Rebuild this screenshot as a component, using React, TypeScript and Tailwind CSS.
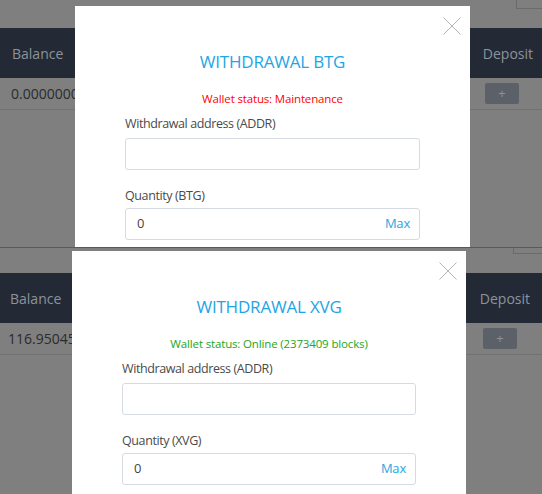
import React from "react";

type PanelProps = {
  height: string;
  bandH: string;
  boxClass: string;
  headerClass: string;
  rowClass: string;
  modalClass: string;
  balance: string;
  coin: string;
  status: string;
  statusClass: string;
};

function CloseX() {
  return (
    <svg width="18" height="18" viewBox="0 0 18 18" className="block">
      <path d="M0.5 0.5 L17.5 17.5 M17.5 0.5 L0.5 17.5" stroke="#b4b4b4" strokeWidth="1" fill="none" />
    </svg>
  );
}

function Panel(p: PanelProps) {
  return (
    <div className={`relative w-full overflow-hidden bg-[#7f7f7f] ${p.height}`}>
      <div className={`flex justify-end items-start ${p.bandH}`}>
        <div className={p.boxClass} />
      </div>
      <div className={`flex items-center justify-between bg-[#232a36] text-[14px] text-[#8c939c] ${p.headerClass}`}>
        <span>Balance</span>
        <span>Deposit</span>
      </div>
      <div className={`flex items-center justify-between border-b border-[#727272] text-[14px] text-[#2b2b2b] ${p.rowClass}`}>
        <span>{p.balance}</span>
        <div className="flex h-[21px] w-[34px] items-center justify-center rounded-[2px] bg-[#5c6169] text-[13px] text-[#8d9198]">
          +
        </div>
      </div>
      <div className={`absolute bg-white h-[260px] flex flex-col px-[50px] pt-[44px] ${p.modalClass}`}>
        <div className="absolute right-[9px] top-[11px]">
          <CloseX />
        </div>
        <div className="h-[24px] text-center text-[17px] leading-[24px] text-[#1ea5e6] tracking-[-0.2px]">
          WITHDRAWAL {p.coin}
        </div>
        <div className={`mt-[17px] h-[16px] text-center text-[11.5px] leading-[16px] tracking-[-0.15px] ${p.statusClass}`}>
          {p.status}
        </div>
        <div className="mt-[8px] h-[18px] text-[12.5px] leading-[18px] tracking-[-0.4px] text-[#4a4a4a]">
          Withdrawal address (ADDR)
        </div>
        <div className="mt-[5px] h-[32px] rounded-[3px] border border-[#d6dbe3]" />
        <div className="mt-[17px] h-[18px] text-[12.5px] leading-[18px] tracking-[-0.4px] text-[#4a4a4a]">
          Quantity ({p.coin})
        </div>
        <div className="mt-[3px] flex h-[32px] items-center justify-between rounded-[3px] border border-[#d6dbe3] pl-[11px] pr-[9px] text-[13px]">
          <span className="text-[#444]">0</span>
          <span className="text-[#29a6e1] tracking-[-0.2px]">Max</span>
        </div>
      </div>
    </div>
  );
}

export default function App() {
  return (
    <div
      className="w-[542px] h-[494px] overflow-hidden bg-[#7f7f7f] flex flex-col"
      style={{ fontFamily: '"Open Sans", "Noto Sans", sans-serif' }}
    >
      <Panel
        height="h-[247px]"
        bandH="h-[28px]"
        boxClass="w-[30px] h-[10px] -mt-[1px] -mr-[4px] border-l border-b border-[#6b6b6b]"
        headerClass="h-[50px] pl-[12px] pr-[9px]"
        rowClass="h-[32px] pl-[11px] pr-[23px]"
        modalClass="left-[75px] top-[6px] w-[395px]"
        balance="0.00000000"
        coin="BTG"
        status="Wallet status: Maintenance"
        statusClass="text-[#ff0000]"
      />
      <div className="h-[1px] w-full bg-[#e0201e]" />
      <Panel
        height="h-[246px]"
        bandH="h-[25px]"
        boxClass="w-[33px] h-[7px] -mt-[1px] -mr-[4px] border-l border-b border-[#6b6b6b]"
        headerClass="h-[50px] pl-[10px] pr-[12px]"
        rowClass="h-[32px] pl-[8px] pr-[25px]"
        modalClass="left-[72px] top-[3px] w-[394px]"
        balance="116.95045000"
        coin="XVG"
        status="Wallet status: Online (2373409 blocks)"
        statusClass="text-[#22a622]"
      />
    </div>
  );
}
